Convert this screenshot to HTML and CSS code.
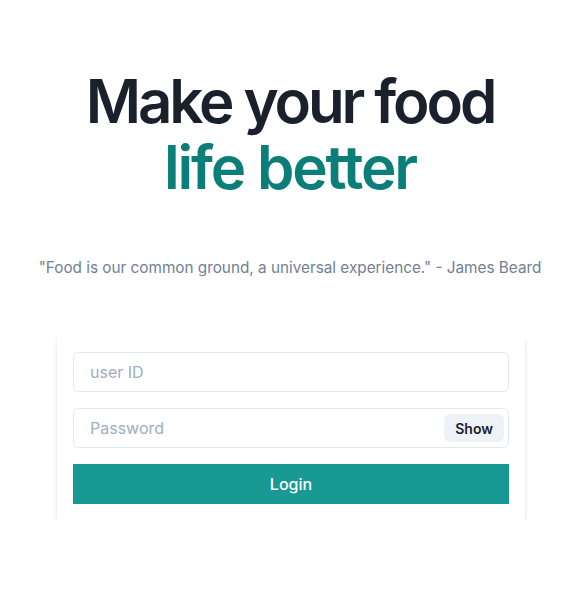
FILE: index.html
```html
<!DOCTYPE html>
<html lang="en">
<head>
<meta charset="utf-8">
<link rel="stylesheet" href="styles.css">
</head>
<body>
<main class="page">
  <h1 class="title"><span class="line1">Make your food</span><br><span class="accent">life better</span></h1>
  <p class="quote">"Food is our common ground, a universal experience." - James Beard</p>
  <form class="card">
    <input class="field" type="text" placeholder="user ID">
    <div class="field pw">
      <input class="pw-input" type="password" placeholder="Password">
      <button type="button" class="show">Show</button>
    </div>
    <button type="button" class="login">Login</button>
  </form>
</main>
</body>
</html>
```
FILE: styles.css
```css
* { box-sizing: border-box; }
html, body { margin: 0; background: #fff; }
body { font-family: Inter, "Noto Sans", sans-serif; color: #1a202c; }
.page {
  display: flex;
  flex-direction: column;
  align-items: center;
  padding-top: 68px;
}
.title {
  margin: 0;
  font-size: 60px;
  font-weight: 600;
  line-height: 66px;
  text-align: center;
  letter-spacing: -2px;
  color: #1a202c;
}
.line1 { letter-spacing: -3.1px; }
.accent { color: #0b7e79; letter-spacing: -2.2px; }
.quote {
  margin: 56px 0 0;
  font-size: 15.3px;
  line-height: 24px;
  color: #718096;
  text-align: center;
}
.card {
  margin: 56px 0 0 2px;
  width: 468px;
  padding: 16px;
  display: flex;
  flex-direction: column;
  gap: 16px;
  background: #fff;
  box-shadow: 0 4px 6px -1px rgba(0,0,0,0.12), 0 1px 3px 0 rgba(0,0,0,0.06);
}
.field {
  height: 40px;
  width: 100%;
  border: 1px solid #e2e8f0;
  border-radius: 6px;
  padding: 0 16px;
  font: inherit;
  font-size: 16px;
  color: #1a202c;
  outline: none;
}
.field::placeholder, .pw-input::placeholder { color: #a0aec0; }
.pw {
  display: flex;
  align-items: center;
  padding-right: 4px;
}
.pw-input {
  flex: 1;
  border: 0;
  outline: none;
  font: inherit;
  font-size: 16px;
  padding: 0;
  min-width: 0;
}
.show {
  height: 28px;
  padding: 0 11px;
  border: 0;
  border-radius: 6px;
  background: #edf2f7;
  font: inherit;
  font-size: 14px;
  font-weight: 600;
  color: #1a202c;
}
.login {
  height: 40px;
  border: 0;
  background: #189994;
  color: #fff;
  font: inherit;
  font-size: 16px;
  font-weight: 500;
}
```
